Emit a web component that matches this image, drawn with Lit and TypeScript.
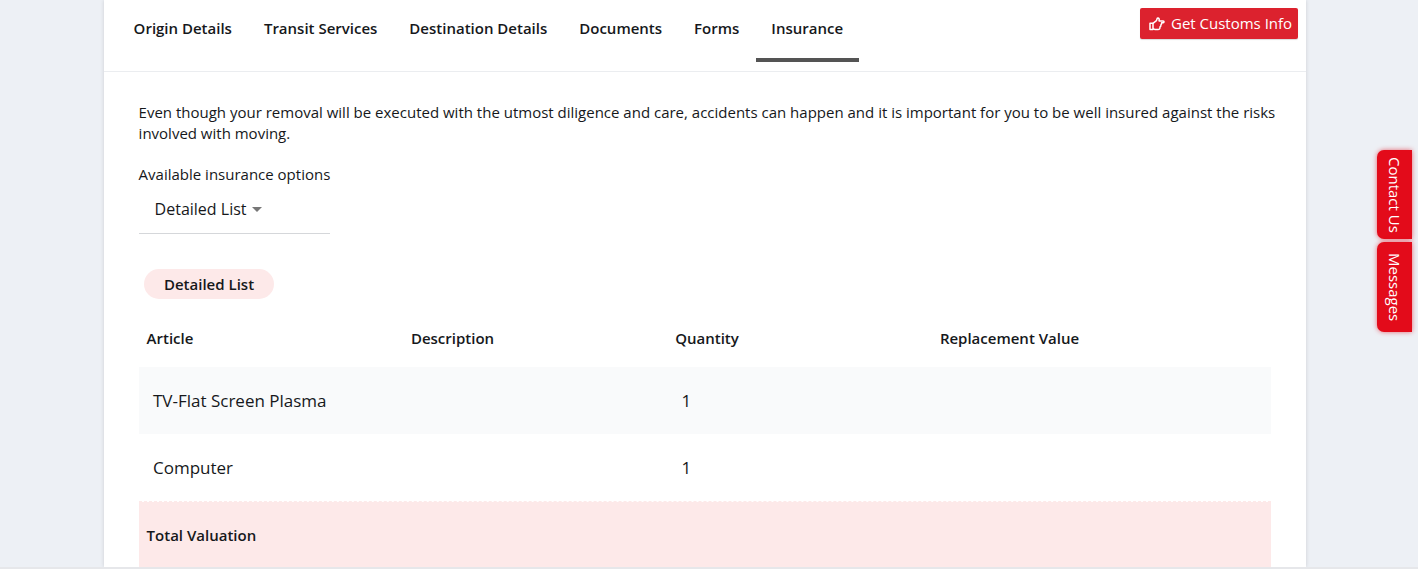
import { LitElement, html, css } from "lit";
import { customElement } from "lit/decorators.js";

@customElement("app-root")
export class AppRoot extends LitElement {
  static styles = css`
    :host { display: block; height: 569px; overflow: hidden; position: relative; background: #edf0f5; font-family: "Open Sans", sans-serif; color: #16181b; font-size: 15px; }
    * { box-sizing: border-box; }
    .page { height: 567px; margin: 0 112px 0 104px; background: #fff; box-shadow: 0 0 4px rgba(0,0,0,.14); overflow: hidden; }
    .bottom { position: absolute; left: 0; right: 0; top: 567px; height: 2px; background: #e6e7ea; }
    .tabsbar { height: 72px; border-bottom: 1px solid #ebedf0; display: flex; justify-content: space-between; padding: 0 8px 0 14px; }
    .tabs { display: flex; }
    .tab { height: 62px; padding: 18px 16.4px 0 15.6px; font-weight: 600; font-size: 15px; line-height: 21px; border-bottom: 4px solid transparent; white-space: nowrap; }
    .tab.active { border-bottom-color: #545454; }
    .cust { margin-top: 8px; height: 31px; width: 158px; background: #dc222e; color: #fff; border-radius: 2px; display: flex; align-items: center; gap: 6px; padding: 0 0 2px 9px; font-size: 15px; box-shadow: 0 1px 1px rgba(0,0,0,.15); white-space: nowrap; }
    .cust svg { margin-top: 2px; }
    .content { padding: 30px 28px 0 34.6px; }
    p { margin: 0; line-height: 21px; font-size: 15px; }
    .label { margin-top: 20px; line-height: 21px; width: 191.5px; white-space: nowrap; }
    .select { width: 191.5px; height: 48px; border-bottom: 1px solid #d5d7da; padding: 13px 0 0 16px; font-size: 16px; line-height: 21px; display: flex; align-items: flex-start; gap: 5px; margin-top: 1px; }
    .caret { margin-top: 8px; width: 0; height: 0; border-left: 5px solid transparent; border-right: 5px solid transparent; border-top: 5px solid #777; }
    .pill { display: inline-block; margin: 35px 0 0 5.4px; height: 30px; padding: 0 20px; line-height: 31px; border-radius: 15px; background: #fde9e9; font-weight: 600; font-size: 15px; }
    .grid { margin-top: 19px; width: 1132.4px; }
    .row { display: grid; }
    .head { height: 49px; font-weight: 600; padding: 10px 8px 0; line-height: 21px; grid-template-columns: 264.3px 264.3px 264.7px 1fr; }
    .item { height: 67px; align-items: center; font-size: 17px; padding-left: 14.4px; grid-template-columns: 258.1px 264.5px 264.5px 1fr; }
    .item.alt { height: 67.4px; }
    .item .q { padding-left: 6px; }
    .alt { background: #f9fafb; }
    .total { height: 71px; background: #fde9e9; background-clip: padding-box; border-top: 1px dashed #fde9e9; padding: 23px 8px 0; font-weight: 600; line-height: 21px; }
    .side { position: absolute; left: 1377px; width: 35px; background: #e30b1a; color: #fff; border-radius: 7px 0 0 7px; box-shadow: 0 0 5px rgba(227,11,26,.6); display: flex; align-items: center; justify-content: center; font-size: 15px; }
    .side span { writing-mode: vertical-rl; white-space: nowrap; }
    .s1 { top: 150px; height: 89px; }
    .s2 { top: 242px; height: 90px; }
  `;

  render() {
    const tabs = ["Origin Details", "Transit Services", "Destination Details", "Documents", "Forms", "Insurance"];
    return html`
      <div class="page">
        <div class="tabsbar">
          <div class="tabs">
            ${tabs.map((t) => html`<div class="tab ${t === "Insurance" ? "active" : ""}">${t}</div>`)}
          </div>
          <div class="cust">
            <svg width="16" height="14" viewBox="0 0 16 14" fill="none" stroke="#fff" stroke-width="1.5" stroke-linejoin="round">
              <path d="M1 6.3h3V12.6H1z" />
              <path d="M4 6.3 7.4 3.7C8 2.9 7.6 1.3 8.8 1.1 10 1 10.6 2.4 10 3.9H14.2C15.3 3.9 15.3 5.7 14.2 5.7H12.6C12.8 7 12.4 7.5 11.9 7.9 12.1 8.9 11.7 9.5 11 9.9 11.1 11.6 10.5 12.6 9 12.6H6.6C5.7 12.6 5 12 4 11.7" />
            </svg>
            <span>Get Customs Info</span>
          </div>
        </div>
        <div class="content">
          <p>Even though your removal will be executed with the utmost diligence and care, accidents can happen and it is important for you to be well insured against the risks involved with moving.</p>
          <div class="label">Available insurance options</div>
          <div class="select"><span>Detailed List</span><i class="caret"></i></div>
          <div class="pill">Detailed List</div>
          <div class="grid">
            <div class="row head"><div>Article</div><div>Description</div><div>Quantity</div><div>Replacement Value</div></div>
            <div class="row item alt"><div>TV-Flat Screen Plasma</div><div></div><div class="q">1</div><div></div></div>
            <div class="row item"><div>Computer</div><div></div><div class="q">1</div><div></div></div>
            <div class="total">Total Valuation</div>
          </div>
        </div>
      </div>
      <div class="bottom"></div>
      <div class="side s1"><span>Contact Us</span></div>
      <div class="side s2"><span>Messages</span></div>
    `;
  }
}
